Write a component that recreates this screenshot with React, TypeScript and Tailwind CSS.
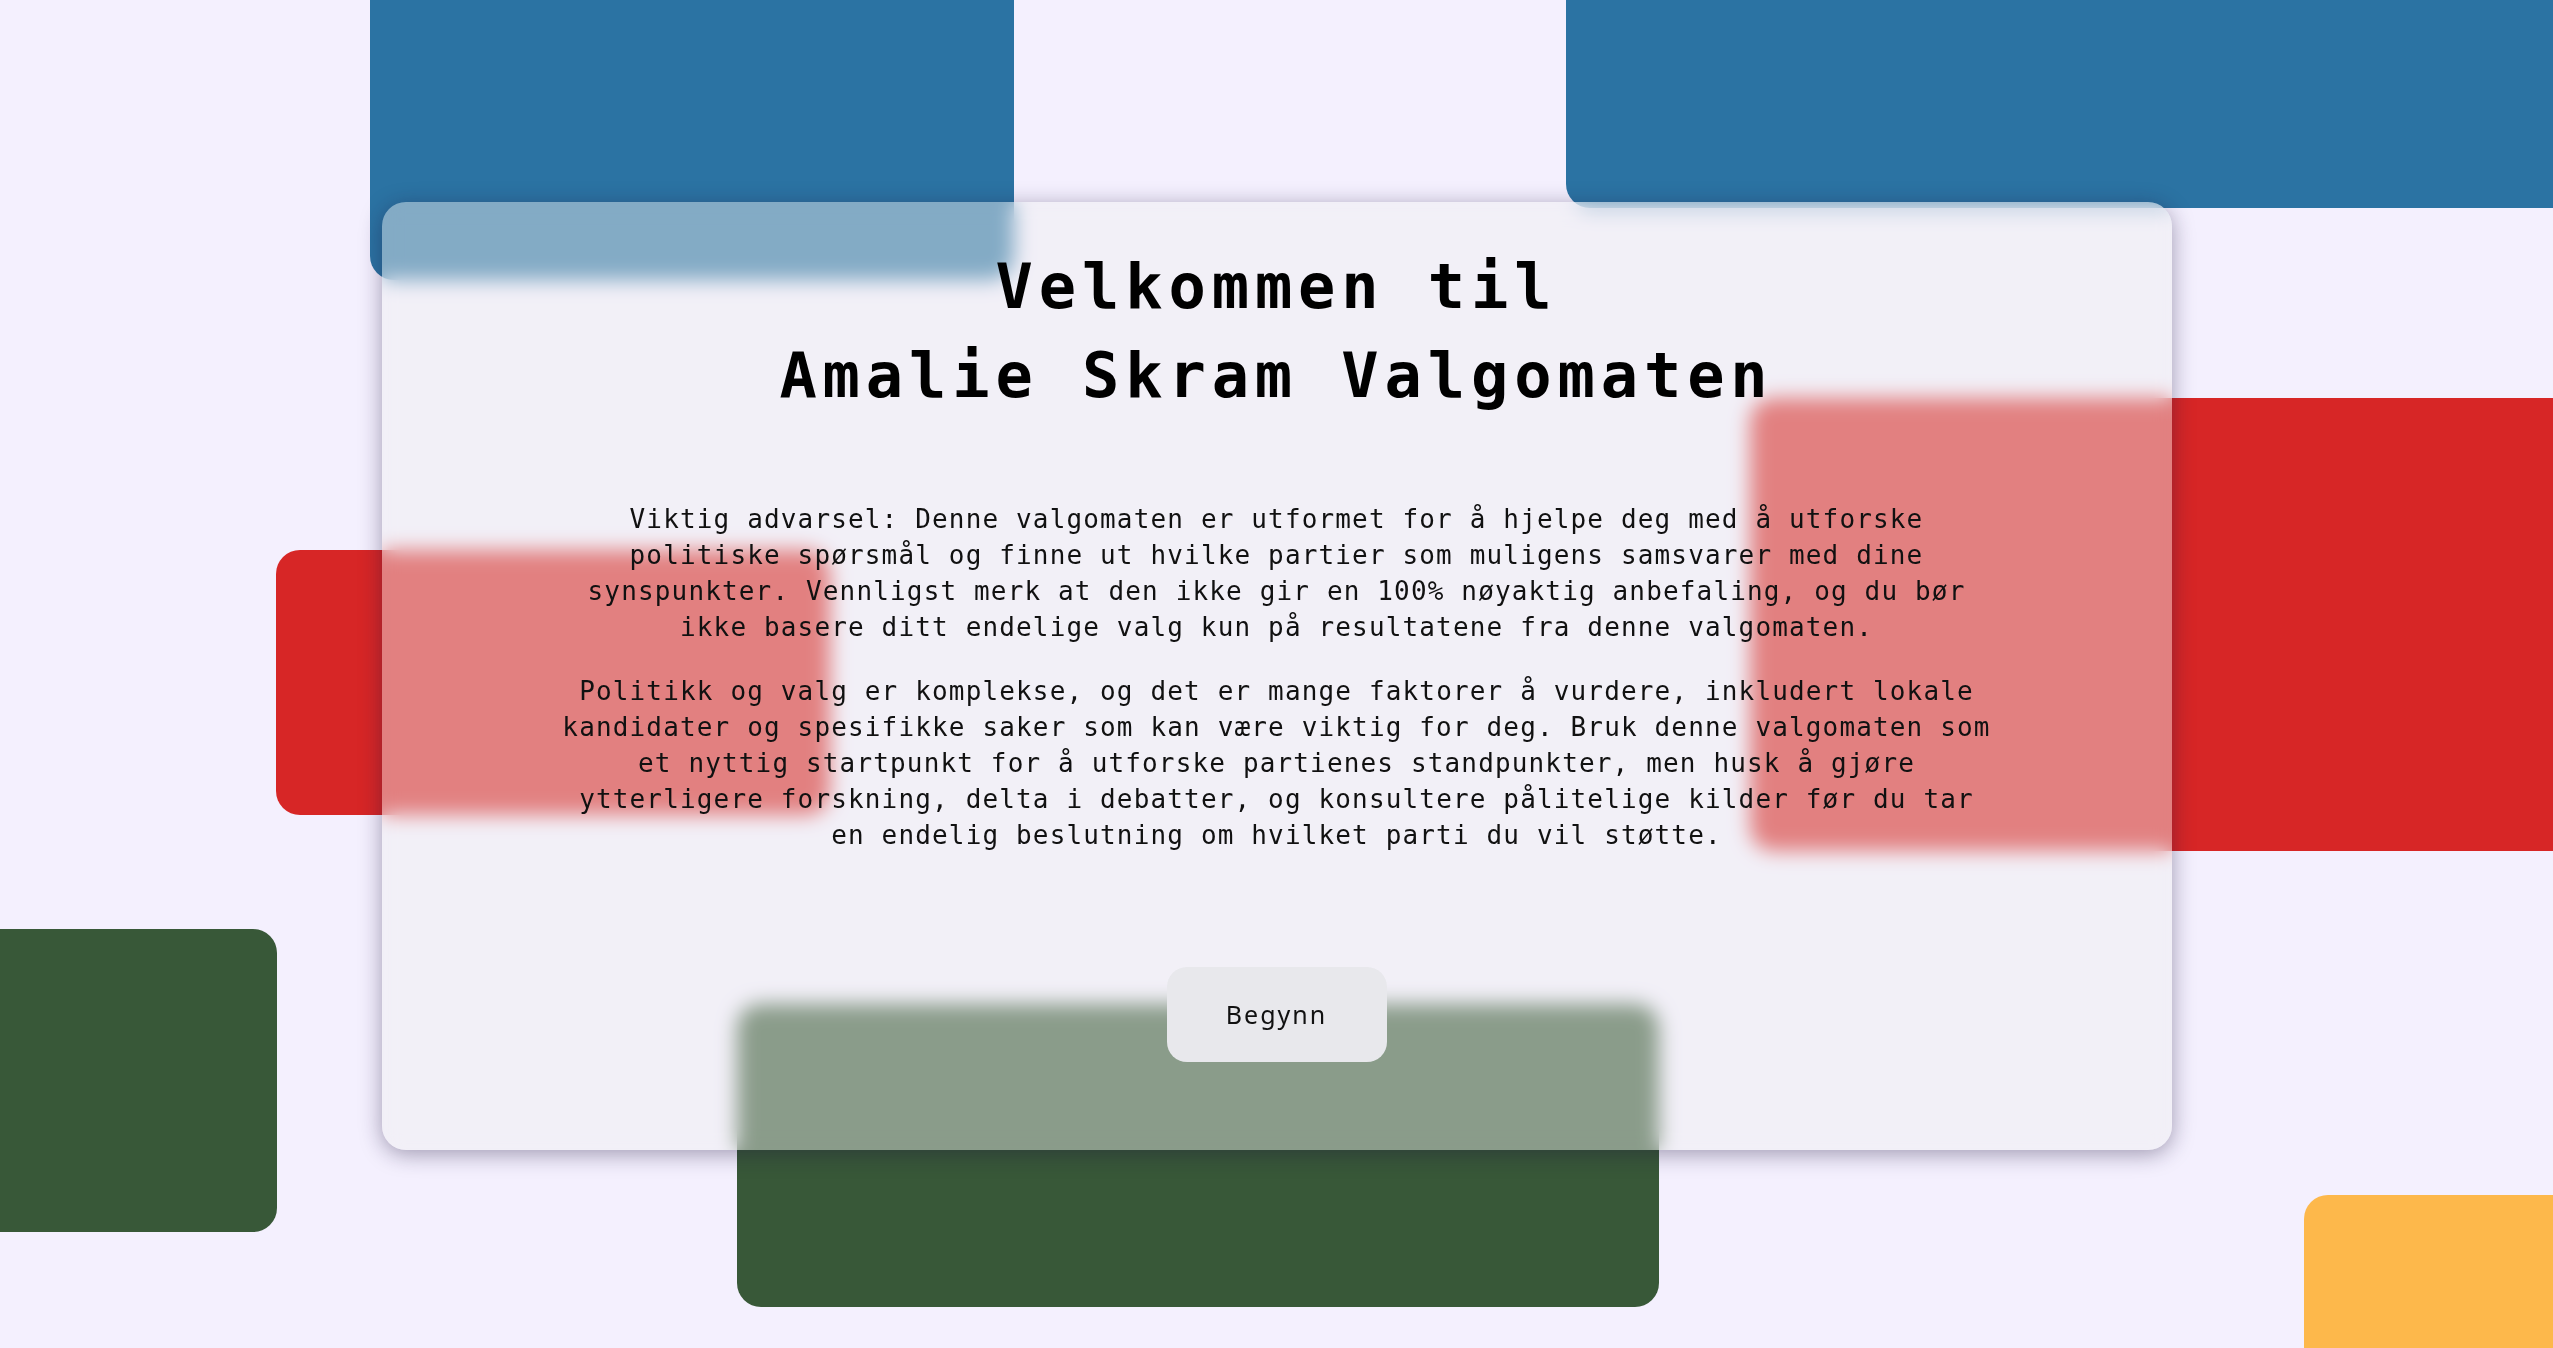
export default function App() {
  return (
    <div className="relative h-screen w-full overflow-hidden bg-[#f4f0fe]">
      {/* decorative blocks behind the card */}
      <div className="absolute left-[370px] top-[-40px] h-[320px] w-[644px] rounded-[24px] bg-[#2b73a3]" />
      <div className="absolute left-[1566px] top-[-40px] h-[248px] w-[1100px] rounded-[24px] bg-[#2b73a3]" />
      <div className="absolute left-[276px] top-[550px] h-[265px] w-[554px] rounded-[24px] bg-[#d72626]" />
      <div className="absolute left-[1750px] top-[398px] h-[453px] w-[900px] rounded-[24px] bg-[#d72626]" />
      <div className="absolute left-[-40px] top-[929px] h-[303px] w-[317px] rounded-[24px] bg-[#385838]" />
      <div className="absolute left-[737px] top-[1004px] h-[303px] w-[922px] rounded-[24px] bg-[#385838]" />
      <div className="absolute left-[2304px] top-[1195px] h-[300px] w-[400px] rounded-[24px] bg-[#fdb84b]" />

      <div className="relative z-10 flex justify-center pt-[202px]">
        <div className="flex h-[948px] w-[1790px] flex-col items-center rounded-[24px] bg-[#f0f0f0]/45 pt-[40px] shadow-[0_4px_22px_rgba(30,20,60,0.4)] backdrop-blur-[10px]">
          <h1 className="text-center font-['DejaVu_Sans_Mono',monospace] text-[62px] font-bold leading-[89px] tracking-[5.9px] text-black">
            Velkommen til
            <br />
            Amalie Skram Valgomaten
          </h1>

          <div className="mt-[81px] flex w-[1436px] flex-col gap-[28px] text-center font-['DejaVu_Sans_Mono',monospace] text-[26px] leading-[36px] tracking-[1.15px] text-[#111]">
            <p>
              Viktig advarsel: Denne valgomaten er utformet for å hjelpe deg med å utforske politiske spørsmål og finne ut hvilke partier som muligens samsvarer med dine synspunkter. Vennligst merk at den ikke gir en 100% nøyaktig anbefaling, og du bør ikke basere ditt endelige valg kun på resultatene fra denne valgomaten.
            </p>
            <p>
              Politikk og valg er komplekse, og det er mange faktorer å vurdere, inkludert lokale kandidater og spesifikke saker som kan være viktig for deg. Bruk denne valgomaten som et nyttig startpunkt for å utforske partienes standpunkter, men husk å gjøre ytterligere forskning, delta i debatter, og konsultere pålitelige kilder før du tar en endelig beslutning om hvilket parti du vil støtte.
            </p>
          </div>

          <button className="mt-[114px] h-[95px] w-[220px] rounded-[20px] bg-[#e8e8ec] font-['Noto_Sans',sans-serif] text-[25px] tracking-[2px] text-[#111]">
            Begynn
          </button>
        </div>
      </div>
    </div>
  )
}
